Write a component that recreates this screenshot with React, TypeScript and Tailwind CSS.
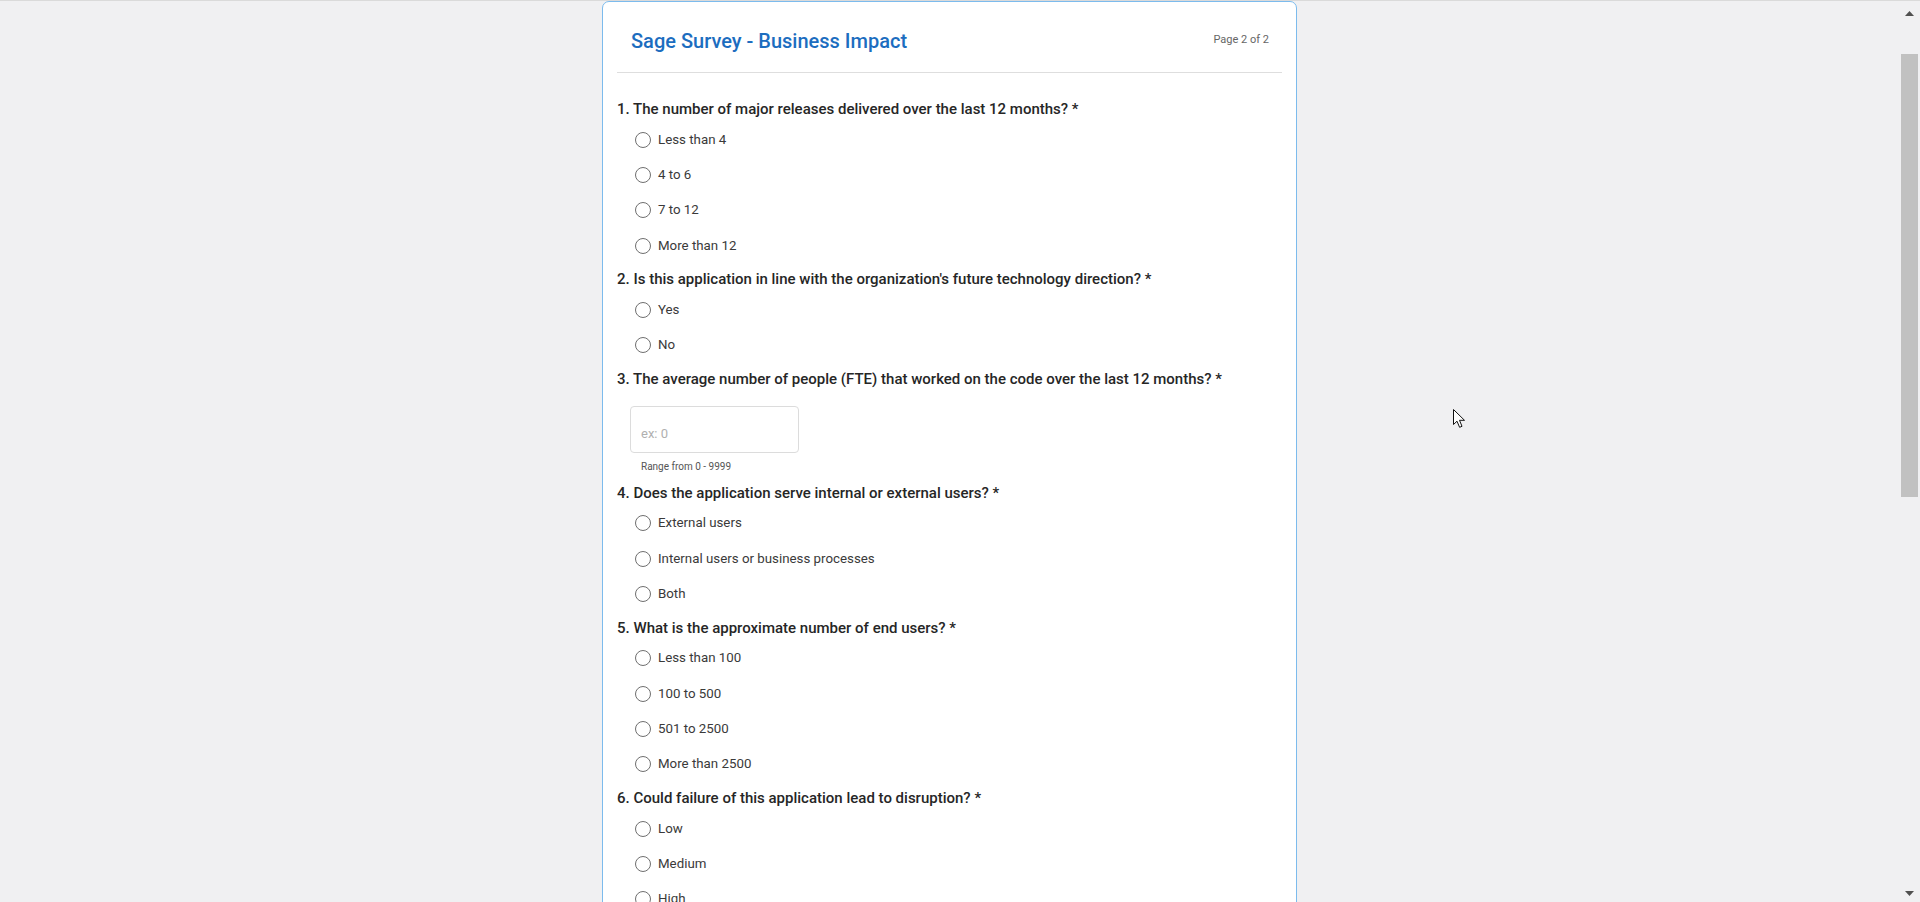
import React from "react";

type Question = {
  num: number;
  text: string;
  options?: string[];
  numeric?: boolean;
};

const questions: Question[] = [
  {
    num: 1,
    text: "The number of major releases delivered over the last 12 months?",
    options: ["Less than 4", "4 to 6", "7 to 12", "More than 12"],
  },
  {
    num: 2,
    text: "Is this application in line with the organization's future technology direction?",
    options: ["Yes", "No"],
  },
  {
    num: 3,
    text: "The average number of people (FTE) that worked on the code over the last 12 months?",
    numeric: true,
  },
  {
    num: 4,
    text: "Does the application serve internal or external users?",
    options: ["External users", "Internal users or business processes", "Both"],
  },
  {
    num: 5,
    text: "What is the approximate number of end users?",
    options: ["Less than 100", "100 to 500", "501 to 2500", "More than 2500"],
  },
  {
    num: 6,
    text: "Could failure of this application lead to disruption?",
    options: ["Low", "Medium", "High"],
  },
];

function RadioOption({ label }: { label: string }) {
  return (
    <label className="flex h-[35.3px] items-center pl-[18px] cursor-pointer">
      <span className="h-[16px] w-[16px] shrink-0 rounded-full border border-[#6f6f6f] bg-white" />
      <span className="ml-[7px] text-[13.3px] text-[#3a3a3a]">{label}</span>
    </label>
  );
}

function QuestionBlock({ q }: { q: Question }) {
  return (
    <div className="mb-[6px]">
      <p className="h-[20px] text-[15px] leading-[20px] font-medium text-[#262626]">
        {q.num}. {q.text} *
      </p>
      {q.options ? (
        <div className="mt-[3px] flex flex-col">
          {q.options.map((opt) => (
            <RadioOption key={opt} label={opt} />
          ))}
        </div>
      ) : null}
      {q.numeric ? (
        <div className="ml-[13px] mt-[17px] mb-[10px]">
          <input
            type="text"
            placeholder="ex: 0"
            className="h-[47px] w-[169px] rounded-[4px] border border-[#dcdcdc] bg-white px-[10px] pt-[9px] text-[13px] text-[#333] outline-none placeholder:text-[#b0b0b0]"
          />
          <p className="mt-[8px] ml-[11px] h-[12px] text-[10px] leading-[12px] text-[#555]">Range from 0 - 9999</p>
        </div>
      ) : null}
    </div>
  );
}

export default function App() {
  return (
    <div
      className="relative flex h-[902px] w-full overflow-hidden border-t border-[#dadada] bg-[#f0f0f2]"
      style={{ fontFamily: "Roboto, 'Liberation Sans', sans-serif" }}
    >
      <main className="flex flex-1 justify-center">
        <div className="h-[1200px] w-[695px] rounded-t-[7px] border border-[#7cbbed] bg-white">
          <div className="px-[14px]">
            <div className="flex h-[71px] items-center justify-between border-b border-[#dedede] pl-[14px] pr-[13px] pt-[7px]">
              <h1 className="text-[20px] leading-[24px] font-medium text-[#1c6dbf]">Sage Survey - Business Impact</h1>
              <span className="text-[11px] text-[#666]">Page 2 of 2</span>
            </div>
            <div className="pt-[26px]">
              {questions.map((q) => (
                <QuestionBlock key={q.num} q={q} />
              ))}
            </div>
          </div>
        </div>
      </main>

      <aside className="flex w-[21px] flex-col items-center bg-[#f0f0f2]">
        <svg width="9" height="5" viewBox="0 0 9 5" className="mt-[10px]">
          <path d="M0 5 L4.5 0 L9 5 Z" fill="#505050" />
        </svg>
        <div className="mt-[38px] h-[443px] w-[17px] bg-[#c1c1c1]" />
        <div className="flex-1" />
        <svg width="9" height="5" viewBox="0 0 9 5" className="mb-[6px]">
          <path d="M0 0 L9 0 L4.5 5 Z" fill="#505050" />
        </svg>
      </aside>

      <svg
        width="13"
        height="20"
        viewBox="0 0 13 20"
        className="absolute left-[1453px] top-[408px]"
      >
        <path
          d="M0.5 0.5 L0.5 15.5 L4 12.2 L6.6 18.3 L9 17.3 L6.5 11.3 L11.5 11.3 Z"
          fill="white"
          stroke="#111"
          strokeWidth="1"
          strokeLinejoin="round"
        />
      </svg>
    </div>
  );
}
